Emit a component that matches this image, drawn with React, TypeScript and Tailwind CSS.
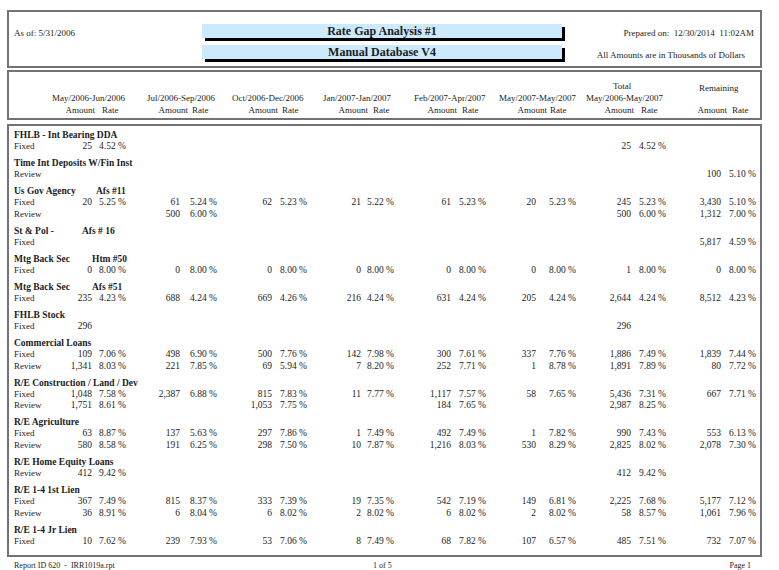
import React from 'react';

type Cell = [string, string] | null;
type Row = { label: string; cells: Cell[] };
type Section = { title: string; sub?: string; subW?: string; rows: Row[] };

const N: Cell = null;
const c = (a: string, r = ''): Cell => [a, r];

const sections: Section[] = [
  { title: 'FHLB - Int Bearing DDA', rows: [{ label: 'Fixed', cells: [c('25', '4.52'), N, N, N, N, N, c('25', '4.52'), N] }] },
  { title: 'Time Int Deposits W/Fin Inst', rows: [{ label: 'Review', cells: [N, N, N, N, N, N, N, c('100', '5.10')] }] },
  {
    title: 'Us Gov Agency', sub: 'Afs #11', subW: 'w-[82px]',
    rows: [
      { label: 'Fixed', cells: [c('20', '5.25'), c('61', '5.24'), c('62', '5.23'), c('21', '5.22'), c('61', '5.23'), c('20', '5.23'), c('245', '5.23'), c('3,430', '5.10')] },
      { label: 'Review', cells: [N, c('500', '6.00'), N, N, N, N, c('500', '6.00'), c('1,312', '7.00')] },
    ],
  },
  { title: 'St & Pol -', sub: 'Afs # 16', subW: 'w-[68px]', rows: [{ label: 'Fixed', cells: [N, N, N, N, N, N, N, c('5,817', '4.59')] }] },
  {
    title: 'Mtg Back Sec', sub: 'Htm #50', subW: 'w-[78px]',
    rows: [{ label: 'Fixed', cells: [c('0', '8.00'), c('0', '8.00'), c('0', '8.00'), c('0', '8.00'), c('0', '8.00'), c('0', '8.00'), c('1', '8.00'), c('0', '8.00')] }],
  },
  {
    title: 'Mtg Back Sec', sub: 'Afs #51', subW: 'w-[78px]',
    rows: [{ label: 'Fixed', cells: [c('235', '4.23'), c('688', '4.24'), c('669', '4.26'), c('216', '4.24'), c('631', '4.24'), c('205', '4.24'), c('2,644', '4.24'), c('8,512', '4.23')] }],
  },
  { title: 'FHLB Stock', rows: [{ label: 'Fixed', cells: [c('296'), N, N, N, N, N, c('296'), N] }] },
  {
    title: 'Commercial Loans',
    rows: [
      { label: 'Fixed', cells: [c('109', '7.06'), c('498', '6.90'), c('500', '7.76'), c('142', '7.98'), c('300', '7.61'), c('337', '7.76'), c('1,886', '7.49'), c('1,839', '7.44')] },
      { label: 'Review', cells: [c('1,341', '8.03'), c('221', '7.85'), c('69', '5.94'), c('7', '8.20'), c('252', '7.71'), c('1', '8.78'), c('1,891', '7.89'), c('80', '7.72')] },
    ],
  },
  {
    title: 'R/E Construction / Land / Dev',
    rows: [
      { label: 'Fixed', cells: [c('1,048', '7.58'), c('2,387', '6.88'), c('815', '7.83'), c('11', '7.77'), c('1,117', '7.57'), c('58', '7.65'), c('5,436', '7.31'), c('667', '7.71')] },
      { label: 'Review', cells: [c('1,751', '8.61'), N, c('1,053', '7.75'), N, c('184', '7.65'), N, c('2,987', '8.25'), N] },
    ],
  },
  {
    title: 'R/E Agriculture',
    rows: [
      { label: 'Fixed', cells: [c('63', '8.87'), c('137', '5.63'), c('297', '7.86'), c('1', '7.49'), c('492', '7.49'), c('1', '7.82'), c('990', '7.43'), c('553', '6.13')] },
      { label: 'Review', cells: [c('580', '8.58'), c('191', '6.25'), c('298', '7.50'), c('10', '7.87'), c('1,216', '8.03'), c('530', '8.29'), c('2,825', '8.02'), c('2,078', '7.30')] },
    ],
  },
  { title: 'R/E Home Equity Loans', rows: [{ label: 'Review', cells: [c('412', '9.42'), N, N, N, N, N, c('412', '9.42'), N] }] },
  {
    title: 'R/E 1-4 1st Lien',
    rows: [
      { label: 'Fixed', cells: [c('367', '7.49'), c('815', '8.37'), c('333', '7.39'), c('19', '7.35'), c('542', '7.19'), c('149', '6.81'), c('2,225', '7.68'), c('5,177', '7.12')] },
      { label: 'Review', cells: [c('36', '8.91'), c('6', '8.04'), c('6', '8.02'), c('2', '8.02'), c('6', '8.02'), c('2', '8.02'), c('58', '8.57'), c('1,061', '7.96')] },
    ],
  },
  {
    title: 'R/E 1-4 Jr Lien',
    rows: [{ label: 'Fixed', cells: [c('10', '7.62'), c('239', '7.93'), c('53', '7.06'), c('8', '7.49'), c('68', '7.82'), c('107', '6.57'), c('485', '7.51'), c('732', '7.07')] }],
  },
];

const amtCls = [
  'w-[44px] pr-[2px]',
  'w-[44px]',
  'w-[44px]',
  'w-[44px] pr-[1px]',
  'w-[44px]',
  'w-[44px]',
  'w-[44px]',
  'w-[44px]',
];

const rateCls = [
  'w-[42px] pl-[5px]',
  'w-[48px] pl-[10px]',
  'w-[46px] pl-[8px]',
  'w-[45px] pl-[5px]',
  'w-[41px] pl-[8px]',
  'w-[51px] pl-[13px]',
  'w-[46px] pl-[8px]',
  'w-[39px] pl-[8px]',
];

type HeadCol = { w: string; top?: string; topCls?: string; month: string; mCls?: string; aW: string; rP: string };
const headCols: HeadCol[] = [
  { w: 'w-[86px]', month: 'May/2006-Jun/2006', mCls: 'pl-[2px]', aW: 'w-[45px]', rP: 'pl-[7px]' },
  { w: 'w-[92px]', month: 'Jul/2006-Sep/2006', mCls: 'pl-[11px]', aW: 'w-[52px]', rP: 'pl-[4px]' },
  { w: 'w-[90px]', month: 'Oct/2006-Dec/2006', mCls: 'pl-[4px]', aW: 'w-[50px]', rP: 'pl-[4px]' },
  { w: 'w-[89px]', month: 'Jan/2007-Jan/2007', mCls: 'pl-[5px]', aW: 'w-[50px]', rP: 'pl-[5px]' },
  { w: 'w-[85px]', month: 'Feb/2007-Apr/2007', mCls: 'pl-[7px]', aW: 'w-[50px]', rP: 'pl-[5px]' },
  { w: 'w-[95px]', month: 'May/2007-May/2007', mCls: 'pl-[7px]', aW: 'w-[55px]', rP: 'pl-[3px]' },
  { w: 'w-[90px]', top: 'Total', topCls: 'pl-[26px]', month: 'May/2006-May/2007', mCls: '-ml-[1px]', aW: 'w-[47px]', rP: 'pl-[7px]' },
  { w: 'w-[83px]', top: 'Remaining', topCls: 'pl-[22px] leading-[16px]', month: '', aW: 'w-[50px]', rP: 'pl-[5px]' },
];

function TitleBar({ text, className = '' }: { text: string; className?: string }) {
  return (
    <div
      className={`h-[14px] w-[360px] bg-[#cdeafc] shadow-[3px_3px_0_#000] text-center text-[12px] font-bold leading-[14px] ${className}`}
    >
      {text}
    </div>
  );
}

export default function App() {
  return (
    <div className="w-[779px] h-[570px] overflow-hidden bg-white font-['Liberation_Serif',serif] text-[#1c1c1c]">
      <div className="pt-[10px] pl-[7px] w-[762px]">
        {/* Box 1: report title */}
        <div className="h-[58px] border-2 border-[#737373] flex">
          <div className="w-[193px] shrink-0 pl-[5px] pt-[15px] text-[9px] leading-[12px]">As of: 5/31/2006</div>
          <div className="w-[360px] shrink-0 pt-[12px]">
            <TitleBar text="Rate Gap Analysis #1" />
            <TitleBar text="Manual Database V4" className="mt-[7px]" />
          </div>
          <div className="flex-1 flex flex-col items-end text-[9px] leading-[12px] whitespace-pre">
            <div className="pt-[15px] pr-[6px]">Prepared on:  12/30/2014  11:02AM</div>
            <div className="mt-[10px] pr-[15px]">All Amounts are in Thousands of Dollars</div>
          </div>
        </div>

        {/* Box 2: column headers */}
        <div className="mt-[2px] h-[50px] border-2 border-[#737373] pl-[5px] pt-[8px] flex text-[9px]">
          <div className="w-[36px] shrink-0" />
          {headCols.map((h, i) => (
            <div key={i} className={`${h.w} shrink-0 flex flex-col whitespace-nowrap`}>
              <div className={`h-[12px] leading-[12px] ${h.topCls ?? ''}`}>{h.top ?? ''}</div>
              <div className={`h-[12px] leading-[12px] ${h.mCls ?? ''}`}>{h.month}</div>
              <div className="h-[12px] leading-[12px] flex">
                <span className={`${h.aW} shrink-0 text-right`}>Amount</span>
                <span className={h.rP}>Rate</span>
              </div>
            </div>
          ))}
        </div>

        {/* Box 3: data */}
        <div className="mt-[4px] h-[433px] border-2 border-[#737373] pl-[5px] pt-[3px] flex flex-col gap-[4.6px]">
          {sections.map((s, si) => (
            <div key={si} className="flex flex-col">
              <div className="h-[12px] leading-[12px] text-[9.5px] font-bold flex whitespace-pre">
                {s.sub ? (
                  <>
                    <span className={`${s.subW} shrink-0`}>{s.title}</span>
                    <span>{s.sub}</span>
                  </>
                ) : (
                  <span>{s.title}</span>
                )}
              </div>
              {s.rows.map((r, ri) => (
                <div key={ri} className="flex h-[11.5px] leading-[11.5px] whitespace-nowrap text-[9.5px]">
                  <div className="w-[36px] shrink-0 text-[9px]">{r.label}</div>
                  {r.cells.map((cell, ci) => (
                    <React.Fragment key={ci}>
                      <div className={`${amtCls[ci]} shrink-0 text-right`}>{cell ? cell[0] : ''}</div>
                      <div className={`${rateCls[ci]} shrink-0 whitespace-pre`}>
                        {cell && cell[1] ? `${cell[1]} %` : ''}
                      </div>
                    </React.Fragment>
                  ))}
                </div>
              ))}
            </div>
          ))}
        </div>
      </div>

      {/* Footer */}
      <div className="mt-[4px] flex text-[8px] leading-[10px] whitespace-pre">
        <div className="w-[373px] shrink-0 pl-[14px]">Report ID 620  -  IRR1019a.rpt</div>
        <div>1 of 5</div>
        <div className="ml-auto pr-[28px]">Page 1</div>
      </div>
    </div>
  );
}
